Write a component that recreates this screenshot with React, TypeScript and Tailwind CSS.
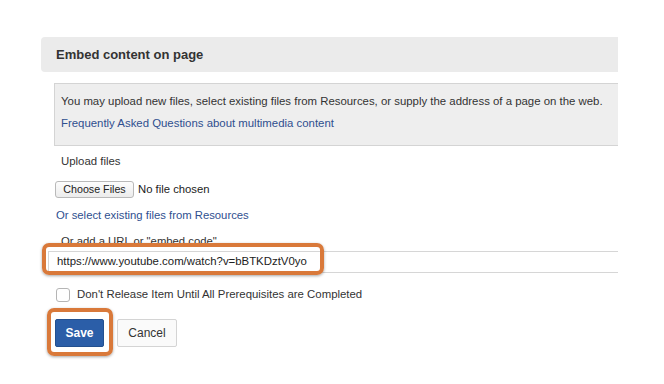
import React from "react";

export default function App() {
  return (
    <div className="relative w-[664px] h-[384px] overflow-hidden bg-white font-['Liberation_Sans',Arial,sans-serif] text-[#333]">
      <div className="pt-[37px] pl-[41px] w-[618px]">
        <div className="h-[35px] bg-[#ebebeb] rounded-l-[4px] flex items-center pl-[15px] text-[13px] font-bold text-[#333]">
          Embed content on page
        </div>
        <div className="mt-[11px] ml-[13px] h-[63px] border-t border-l border-b border-[#d4d4d4] bg-[#eeeeee] pl-[6px] pt-[8px] text-[11.4px] leading-[18px] whitespace-nowrap">
          <div className="text-[#333]">
            You may upload new files, select existing files from Resources, or supply the address of a page on the web.
          </div>
          <div className="mt-[4px] text-[#2f4f8f]">Frequently Asked Questions about multimedia content</div>
        </div>
        <div className="mt-[6px] ml-[20px] text-[11.4px] leading-[18px]">Upload files</div>
        <div className="mt-[11px] ml-[14px] flex items-center gap-[4px] text-[11.3px]">
          <div className="h-[17px] w-[79px] flex items-center justify-center rounded-[3px] border border-[#b9b9b9] bg-gradient-to-b from-[#fdfdfd] to-[#ececec] text-[10.7px] text-[#222]">
            Choose Files
          </div>
          <span className="text-[#222]">No file chosen</span>
        </div>
        <div className="mt-[8px] ml-[15px] text-[11.3px] leading-[18px] text-[#2f4f8f]">
          Or select existing files from Resources
        </div>
        <div className="mt-[8px] ml-[20px] text-[11.3px] leading-[18px]">Or add a URL or "embed code"</div>
        <div className="mt-[1px] ml-[7px] h-[22px] border-t border-b border-l border-[#d6d6d6] flex items-center pl-[8px] text-[11.4px] text-[#222]">
          https://www.youtube.com/watch?v=bBTKDztV0yo
        </div>
        <div className="mt-[15px] ml-[15px] flex items-center gap-[7px] h-[14px]">
          <div className="w-[14px] h-[14px] rounded-[3px] border border-[#b5b5b5] bg-white" />
          <span className="text-[11.4px] text-[#333]">Don't Release Item Until All Prerequisites are Completed</span>
        </div>
        <div className="mt-[17px] ml-[14px] flex items-center gap-[13px]">
          <div className="h-[28px] w-[49px] flex items-center justify-center rounded-[2px] bg-[#2b5ea8] border border-[#23508f] text-white font-bold text-[12px]">
            Save
          </div>
          <div className="h-[28px] w-[60px] flex items-center justify-center rounded-[2px] bg-[#fafafa] border border-[#d4d4d4] text-[#333] text-[12px]">
            Cancel
          </div>
        </div>
      </div>
      <div className="absolute left-[42px] top-[243px] w-[282px] h-[32px] rounded-[7px] border-[4px] border-[#d9793a] shadow-[0_1px_3px_rgba(0,0,0,0.35)]" />
      <div className="absolute left-[47px] top-[308px] w-[66px] h-[48px] rounded-[7px] border-[4px] border-[#d9793a] shadow-[0_1px_3px_rgba(0,0,0,0.35)]" />
    </div>
  );
}
